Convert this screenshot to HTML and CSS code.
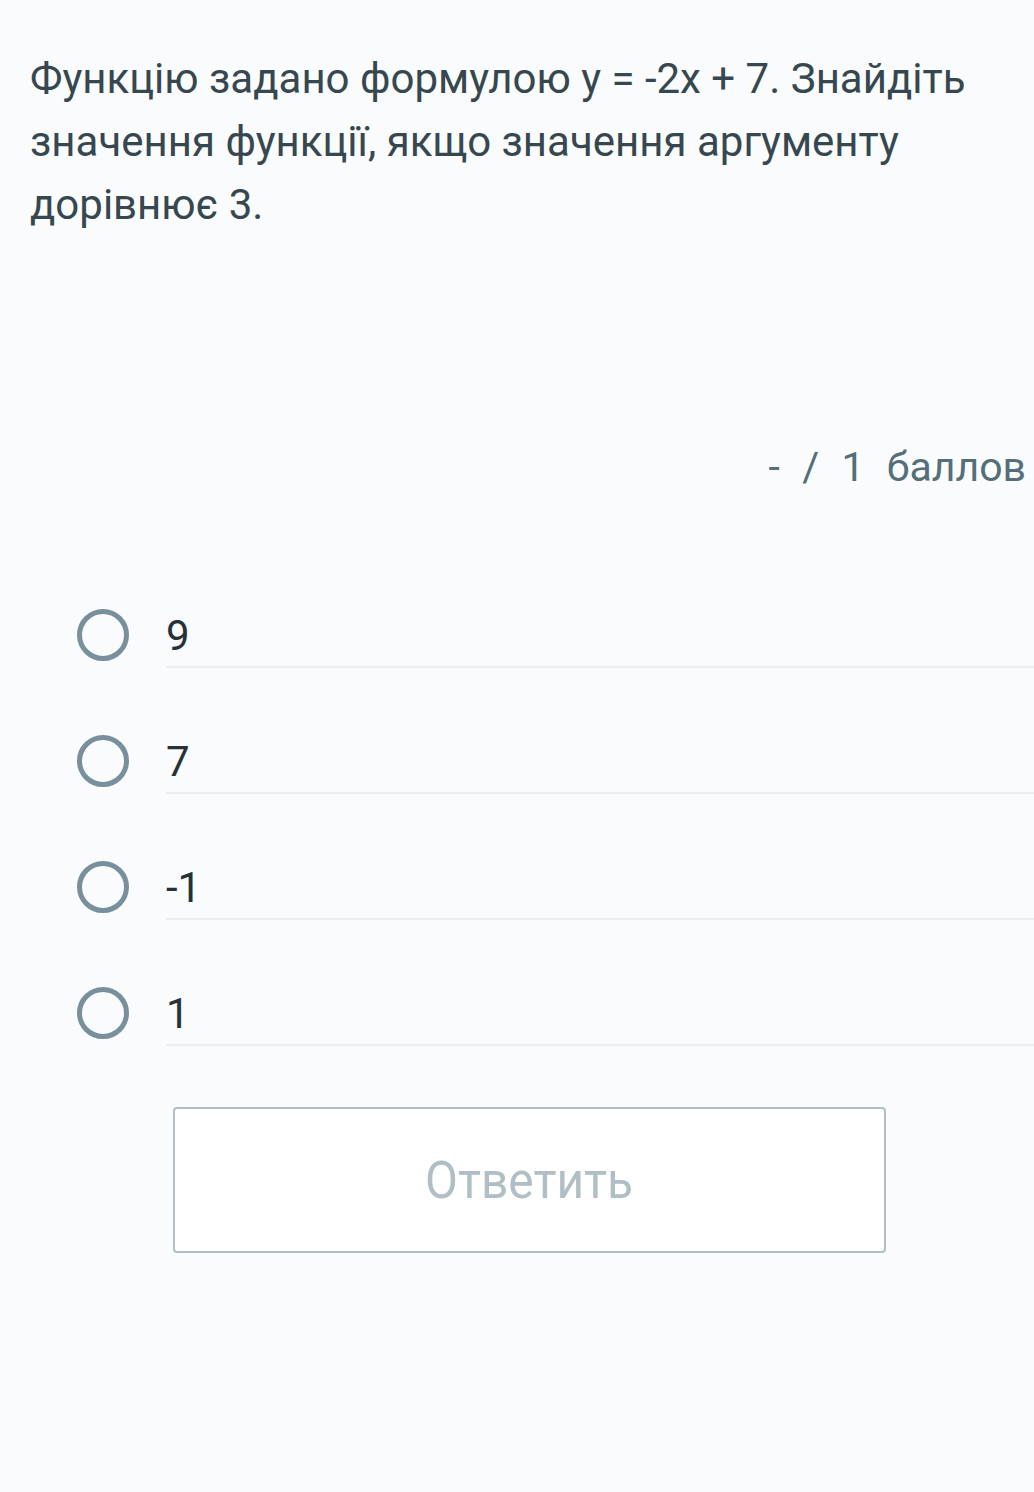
FILE: index.html
```html
<!DOCTYPE html>
<html lang="uk">
<head>
<meta charset="utf-8">
<link rel="stylesheet" href="styles.css">
</head>
<body>
<main class="page">
  <p class="question">Функцію задано формулою y = -2x + 7. Знайдіть значення функції, якщо значення аргументу дорівнює 3.</p>
  <div class="score">- &nbsp;/ &nbsp;1 &nbsp;баллов</div>
  <ul class="options">
    <li class="option"><span class="radio"></span><span class="label">9</span></li>
    <li class="option"><span class="radio"></span><span class="label">7</span></li>
    <li class="option"><span class="radio"></span><span class="label">-1</span></li>
    <li class="option"><span class="radio"></span><span class="label">1</span></li>
  </ul>
  <div class="actions">
    <button class="submit" type="button"><span class="submit-text">Ответить</span></button>
  </div>
</main>
</body>
</html>
```
FILE: styles.css
```css
html, body {
  margin: 0;
  padding: 0;
  background: #f9fbfc;
}
body {
  font-family: Roboto, "Noto Sans", sans-serif;
  color: #37474f;
  width: 1034px;
  height: 1492px;
  overflow: hidden;
}
.page {
  padding: 47px 0 0 30px;
}
.question {
  margin: 0;
  font-size: 42px;
  line-height: 63px;
  color: #37474f;
  padding-right: 30px;
}
.score {
  margin-top: 206px;
  text-align: right;
  padding-right: 8px;
  font-size: 41px;
  line-height: 50px;
  color: #546e7a;
  word-spacing: 1px;
}
.options {
  list-style: none;
  margin: 81px 0 0 0;
  padding: 0;
}
.option {
  display: flex;
  align-items: stretch;
  height: 126px;
}
.radio {
  flex: none;
  box-sizing: border-box;
  width: 52px;
  height: 52px;
  border: 5px solid #78909c;
  border-radius: 50%;
  margin: 0 37px 0 47px;
  align-self: center;
  position: relative;
  top: -1px;
}
.label {
  flex: 1;
  display: flex;
  align-items: center;
  font-size: 42px;
  color: #263238;
  border-bottom: 2px solid #eceff1;
  height: 62px;
  align-self: center;
  position: relative;
  top: 0;
}
.actions {
  padding: 30px 0 0 143px;
}
.submit {
  box-sizing: border-box;
  width: 713px;
  height: 146px;
  background: #ffffff;
  border: 2px solid #b0bec5;
  border-radius: 4px;
  font-family: Roboto, "Noto Sans", sans-serif;
  font-size: 52px;
  color: #b0bec5;
  padding: 0;
}
.submit-text {
  display: inline-block;
  transform: scaleX(0.92);
}
```
